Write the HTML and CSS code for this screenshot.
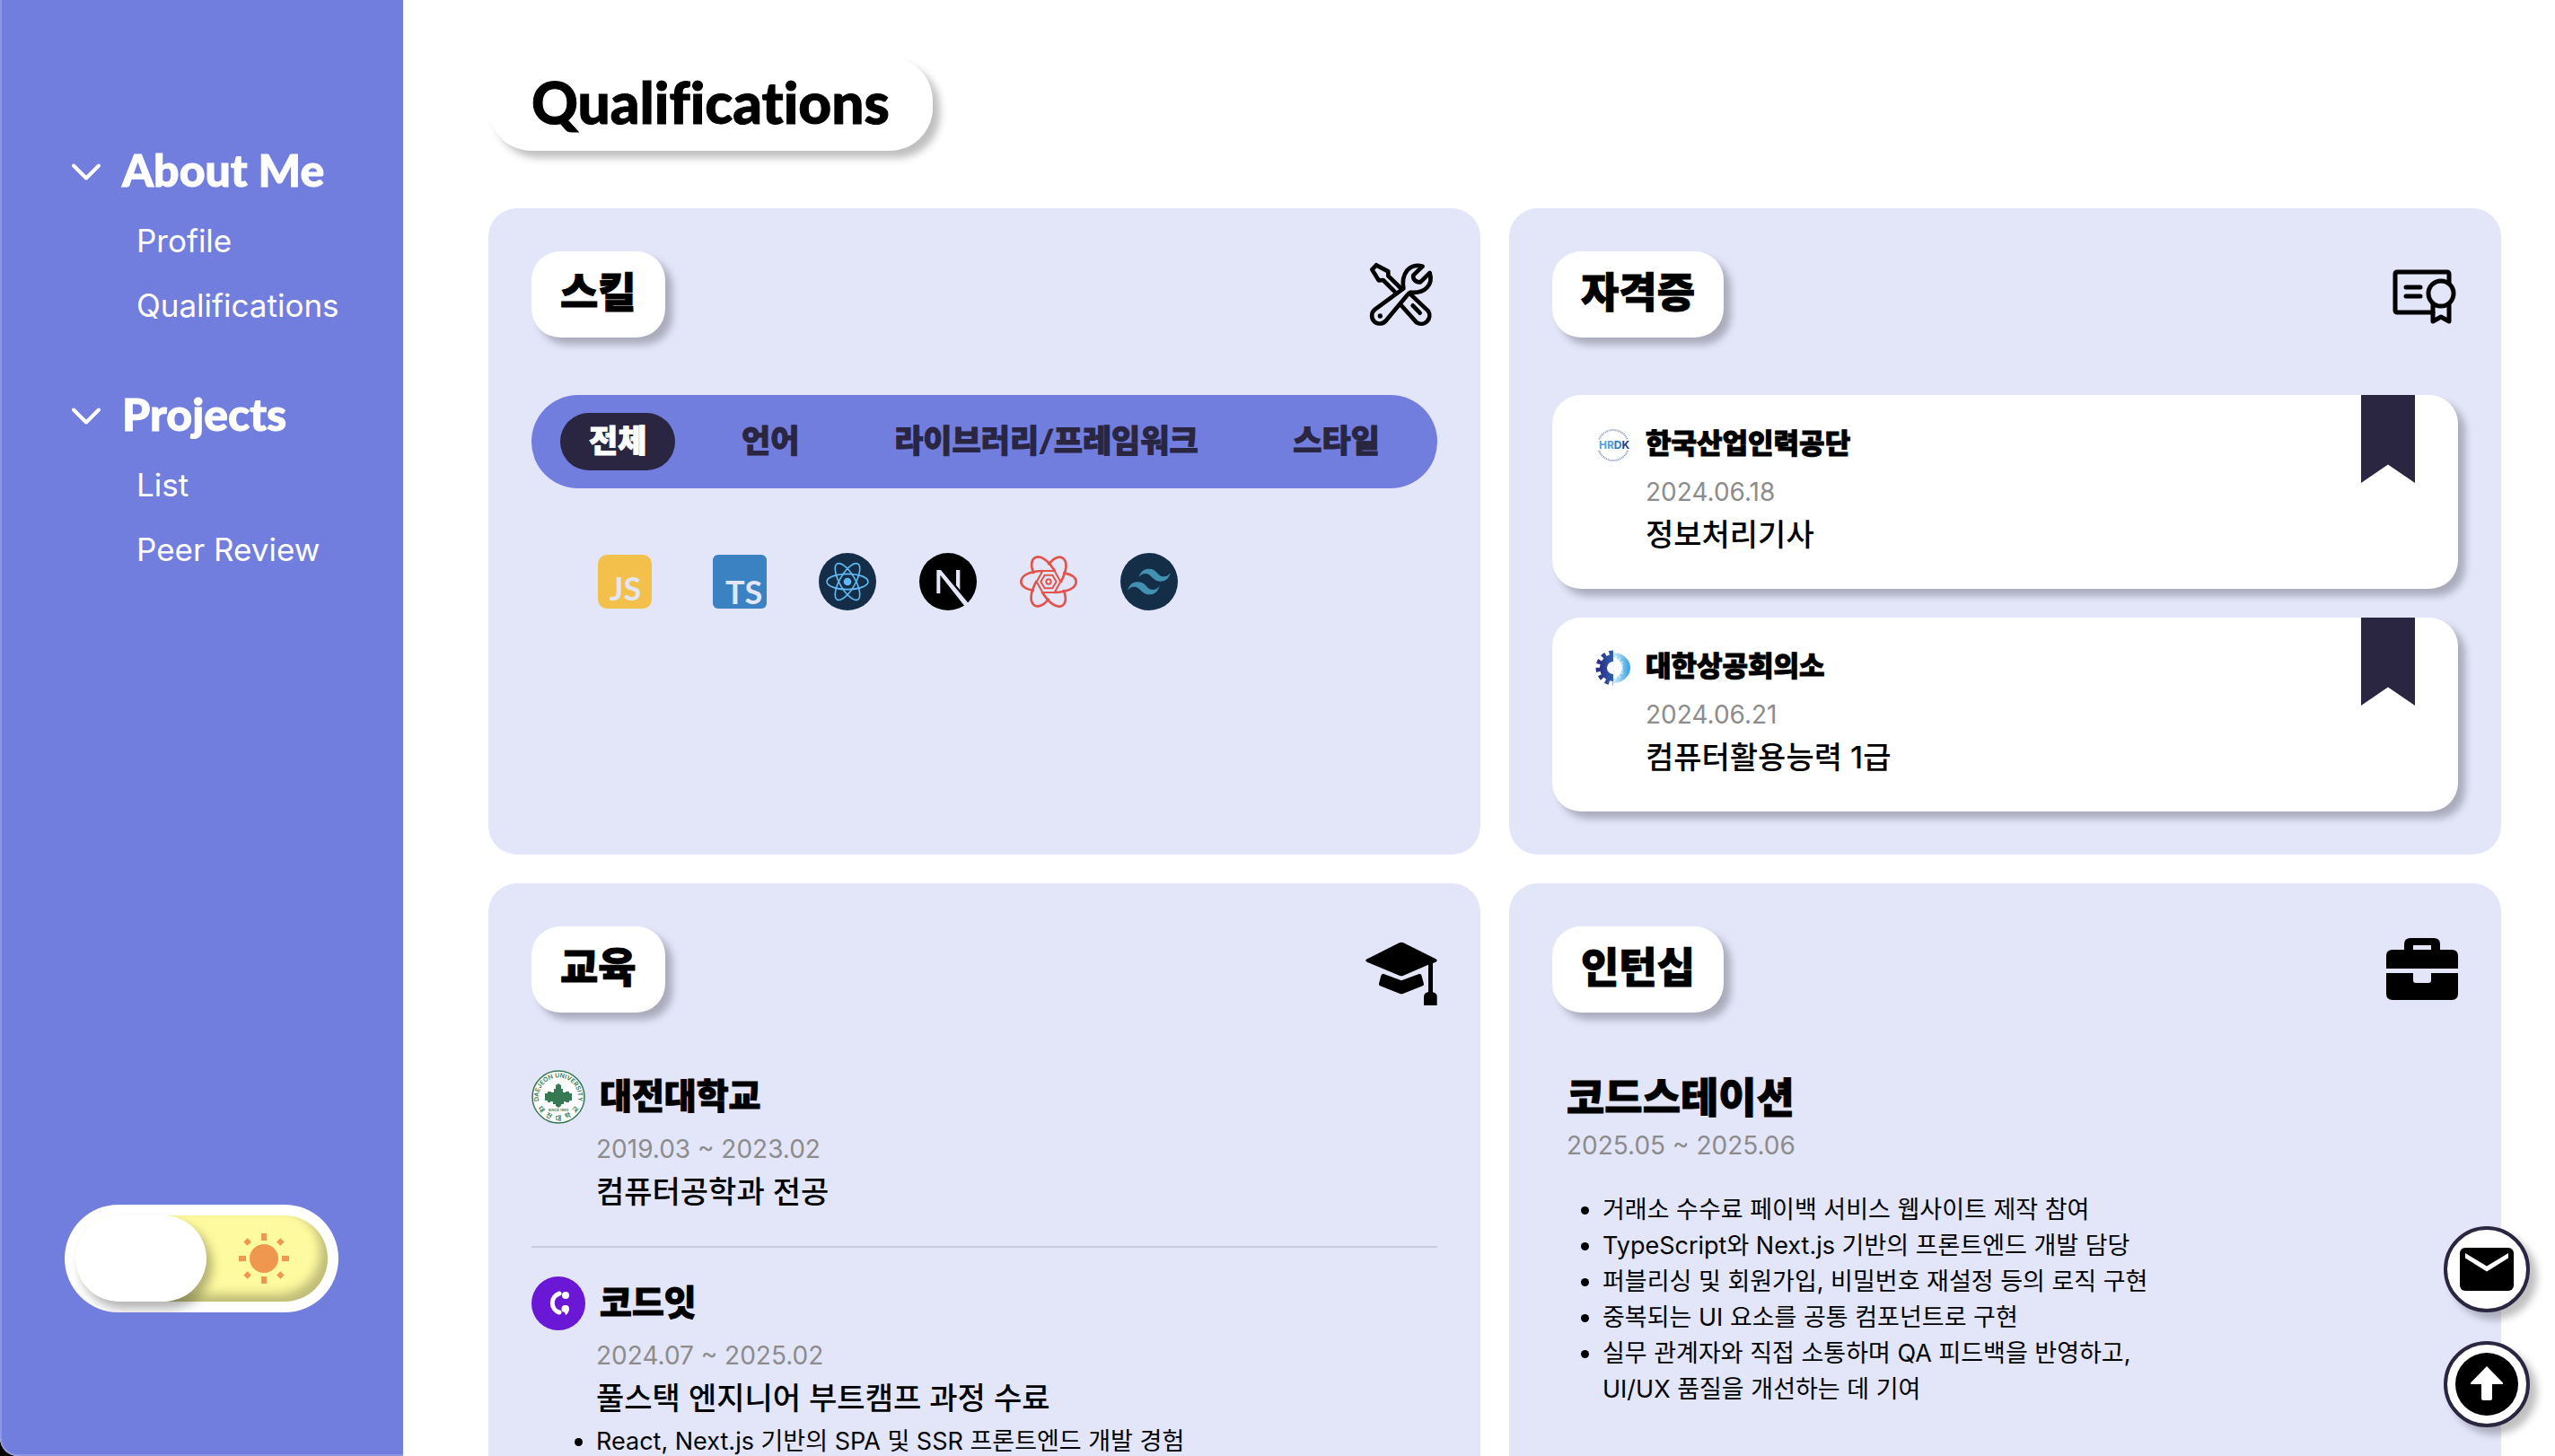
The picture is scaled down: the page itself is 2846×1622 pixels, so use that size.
FILE: index.html
```html
<!DOCTYPE html>
<html lang="ko">
<head>
<meta charset="utf-8">
<meta name="viewport" content="width=device-width, initial-scale=1">
<title>Qualifications</title>
<link rel="stylesheet" href="styles.css">
</head>
<body>
<div class="app">
  <aside class="sidebar">
    <nav class="nav">
      <section class="nav-group">
        <button class="nav-head" type="button" aria-expanded="true">
          <svg class="chevron" viewBox="0 0 32 20" aria-hidden="true"><path d="M2 2.500 16 16.500 30 2.500"/></svg>
          <span class="nav-title">About Me</span>
        </button>
        <a class="nav-link" href="#profile">Profile</a>
        <a class="nav-link" href="#qualifications">Qualifications</a>
      </section>
      <section class="nav-group">
        <button class="nav-head" type="button" aria-expanded="true">
          <svg class="chevron" viewBox="0 0 32 20" aria-hidden="true"><path d="M2 2.500 16 16.500 30 2.500"/></svg>
          <span class="nav-title">Projects</span>
        </button>
        <a class="nav-link" href="#list">List</a>
        <a class="nav-link" href="#peer-review">Peer Review</a>
      </section>
    </nav>
    <label class="toggle">
      <input class="toggle-input" type="checkbox" aria-label="Dark mode">
      <span class="toggle-track">
        <span class="toggle-thumb"></span>
        <svg class="sun" viewBox="0 0 56 56" aria-hidden="true">
          <circle cx="28" cy="28" r="16"/>
          <path d="M25 0h6v8h-6zM25 48h6v8h-6zM0 25h8v6H0zM48 25h8v6h-8z"/>
          <path d="M25 -1h6v6h-6zM25 51h6v6h-6zM-1 25h6v6h-6zM51 25h6v6h-6z" transform="rotate(45 28 28)"/>
        </svg>
      </span>
    </label>
  </aside>

  <main class="main" id="qualifications">
    <h1 class="page-title">Qualifications</h1>
    <div class="cards">
      <section class="card">
        <header class="card-head">
          <h2 class="badge">스킬</h2>
          <svg class="card-icon line-icon" viewBox="123 114 240 240" stroke-width="14" aria-hidden="true">
            <path d="M159 136 145 151 167 187 182 186 222 226M159 136 199 157 199 172 241 213"/>
            <path d="M276 236 333 290A28 28 0 0 1 294 328L242 270M281 271 305 296"/>
            <path d="M250 214C242 166 268 128 314 140L283 170C280 182 290 194 306 193L338 162C350 204 320 232 274 227C268 229 266 232 262 237L192 321C182 334 162 335 152 324C141 312 142 294 155 284Z"/>
            <circle cx="172" cy="306" r="8" fill="#000" stroke="none"/>
          </svg>
        </header>
        <div class="tabs" role="tablist">
          <button class="tab active" type="button" role="tab" aria-selected="true">전체</button>
          <button class="tab" type="button" role="tab" aria-selected="false">언어</button>
          <button class="tab" type="button" role="tab" aria-selected="false">라이브러리/프레임워크</button>
          <button class="tab" type="button" role="tab" aria-selected="false">스타일</button>
        </div>
        <ul class="skills">
          <li><svg class="skill wide" viewBox="0 0 80 80" role="img" aria-label="JavaScript"><rect x="10" y="10" width="60" height="60" rx="10" fill="#f3c14b"/><text class="skill-text" x="23" y="61" fill="#e3e5f9">JS</text></svg></li>
          <li><svg class="skill wide" viewBox="0 0 80 80" role="img" aria-label="TypeScript"><rect x="10" y="10" width="60" height="60" rx="6" fill="#3b82c2"/><text class="skill-text" x="24" y="65" fill="#e3e5f9">TS</text></svg></li>
          <li><svg class="skill" viewBox="36 48 192 192" role="img" aria-label="React"><circle cx="132" cy="144" r="96" fill="#152e47"/><g fill="none" stroke="#61b8f3" stroke-width="5"><ellipse cx="132" cy="144" rx="69" ry="26"/><ellipse cx="132" cy="144" rx="69" ry="26" transform="rotate(60 132 144)"/><ellipse cx="132" cy="144" rx="69" ry="26" transform="rotate(120 132 144)"/></g><circle cx="132" cy="144" r="13" fill="#61b8f3"/></svg></li>
          <li><svg class="skill" viewBox="372 48 192 192" role="img" aria-label="Next.js"><circle cx="468" cy="144" r="96"/><path d="M430 105h14l92 111-13 9-81-103v61h-12zM495 105h13v67l-13-16z" fill="#e3e5f9"/></svg></li>
          <li><svg class="skill" viewBox="708 48 192 192" role="img" aria-label="React Query">
            <g fill="none" stroke="#e2534b" stroke-width="8"><path id="petal" d="M756 173C725 170 712 156 712 144C712 122 742 109 786 108"/><use href="#petal" transform="rotate(60 804 144)"/><use href="#petal" transform="rotate(120 804 144)"/><use href="#petal" transform="rotate(180 804 144)"/><use href="#petal" transform="rotate(240 804 144)"/><use href="#petal" transform="rotate(300 804 144)"/>
            <path d="M784 108h40l20 36-20 36h-40l-20-36z" stroke-width="6"/><path d="M791 122h26l13 22-13 22h-26l-13-22z" stroke-width="6"/><circle cx="804" cy="144" r="8" stroke-width="6"/></g></svg></li>
          <li><svg class="skill" viewBox="1044 48 192 192" role="img" aria-label="Tailwind CSS"><circle cx="1140" cy="144" r="96" fill="#152e47"/><path id="wave" d="M1105 129C1112 108 1124 101 1139 101C1168 101 1167 126 1188 127C1198 127 1206 122 1212 114C1205 136 1194 143 1177 143C1151 142 1148 117 1127 117C1118 117 1111 121 1105 129Z" fill="#4391b1"/><use href="#wave" x="-37" y="44"/></svg></li>
        </ul>
      </section>

      <section class="card">
        <header class="card-head">
          <h2 class="badge">자격증</h2>
          <svg class="card-icon line-icon" viewBox="0 0 80 80" stroke-width="5" aria-hidden="true">
            <path d="M52 60H12a2 2 0 0 1-2-2V17a2 2 0 0 1 2-2H68a2 2 0 0 1 2 2V27M22 32H38M22 42H38"/>
            <circle cx="61" cy="39" r="14"/><path d="M52 50V70L61 65 70 70V50"/>
          </svg>
        </header>
        <div class="certs">
          <article class="cert">
            <svg class="cert-logo" viewBox="0 0 40 40" role="img" aria-label="HRDK"><circle cx="20" cy="20" r="17" fill="none" stroke="#7f91b8" stroke-width="2" stroke-dasharray="1 1"/><path d="M2 14h36v12H2z" fill="#fff"/><text class="hrdk" x="4" y="24" fill="#4aa3e3">HR<tspan fill="#2f77c0">D</tspan><tspan fill="#263f8c">K</tspan></text></svg>
            <div class="cert-body">
              <h3 class="cert-name">한국산업인력공단</h3>
              <time class="date">2024.06.18</time>
              <p class="subject">정보처리기사</p>
            </div>
            <span class="bookmark"></span>
          </article>
          <article class="cert">
            <svg class="cert-logo" viewBox="0 0 40 40" role="img" aria-label="KCCI">
              <defs>
                <linearGradient id="gear" x1="0" x2="1"><stop offset="0" stop-color="#2b2f87"/><stop offset="1" stop-color="#2f62ae"/></linearGradient>
                <linearGradient id="dots" x1="0" x2="1"><stop offset="0" stop-color="#d6ecf9"/><stop offset="1" stop-color="#2f9fe3"/></linearGradient>
              </defs>
              <path d="M20 5A15 15 0 0 0 20 35V27A7 7 0 0 1 20 13Z" fill="url(#gear)"/>
              <path d="M20 3.500A16.500 16.500 0 0 0 20 36.500" fill="none" stroke="url(#gear)" stroke-width="6" stroke-dasharray="4.500 4"/>
              <path d="M20 3A19 17 0 0 1 20 37V32Q29 30 30 20Q29 10 20 8Z" fill="url(#dots)"/>
              <path d="M23 7V11M27 9V14M30 13V27M27 26V31M23 29V33" stroke="#fff" stroke-width="1" stroke-dasharray="2 1" fill="none"/>
            </svg>
            <div class="cert-body">
              <h3 class="cert-name">대한상공회의소</h3>
              <time class="date">2024.06.21</time>
              <p class="subject">컴퓨터활용능력 1급</p>
            </div>
            <span class="bookmark"></span>
          </article>
        </div>
      </section>

      <section class="card">
        <header class="card-head">
          <h2 class="badge">교육</h2>
          <svg class="card-icon" viewBox="33 30 240 240" aria-hidden="true"><path d="M153 59Q156 59 160 61L268 115Q276 120 268 125L258 129V226Q272 229 272 240V270H228V240Q229 228 243 225V134L160 170Q153 173 146 170L38 125Q29 120 38 115L146 61Q150 59 153 59ZM92 164 153 187 212 165Q218 164 220 169L228 198Q229 203 224 205L158 231Q153 233 148 231L82 205Q77 203 78 197L85 170Q87 165 92 164Z"/></svg>
        </header>
        <div class="schools">
          <article class="school">
            <div class="school-head">
              <svg class="school-logo" viewBox="0 0 60 60" role="img" aria-label="DAEJEON UNIVERSITY">
                <circle cx="30" cy="30" r="29" fill="#fff" stroke="#357a52" stroke-width="1.500"/>
                <defs><path id="arc-top" d="M9 37A22 22 0 1 1 51 37"/><path id="arc-bottom" d="M5 37A26 26 0 0 0 55 37"/></defs>
                <g class="seal"><text><textPath href="#arc-top" startOffset="50%" text-anchor="middle">DAEJEON UNIVERSITY</textPath></text>
                <text class="seal-ko" text-anchor="middle"><textPath href="#arc-bottom" startOffset="14%">대</textPath><textPath href="#arc-bottom" startOffset="32%">전</textPath><textPath href="#arc-bottom" startOffset="50%">대</textPath><textPath href="#arc-bottom" startOffset="68%">학</textPath><textPath href="#arc-bottom" startOffset="86%">교</textPath></text>
                <text class="seal-since" x="30" y="46" text-anchor="middle">SINCE 1980</text></g>
                <path d="M15 26h3v-2h4v1h3v-4h2v-4l3-2 3 2v4h2v4h3v-1h4v2h3v8h-3v2h-4v-1h-2v3h-3v2l-3 2-3-2v-2h-3v-3h-3v1h-3v-2h-3z" fill="#357a52"/>
              </svg>
              <h3 class="school-name">대전대학교</h3>
            </div>
            <div class="school-body">
              <p class="date">2019.03 ~ 2023.02</p>
              <p class="subject">컴퓨터공학과 전공</p>
            </div>
          </article>
          <article class="school">
            <div class="school-head">
              <svg class="school-logo" viewBox="0 0 60 60" role="img" aria-label="codeit"><circle cx="30" cy="30" r="30" fill="#6a18d6"/><path d="M31 19A11 11 0 0 0 31 40" fill="none" stroke="#fff" stroke-width="5" stroke-linecap="round"/><circle cx="38" cy="21" r="4" fill="#fff"/><path d="M38 32a4 4 0 0 1 4 4c0 3-2 6-4 7l-1-3a4 4 0 0 1 1-8z" fill="#fff"/></svg>
              <h3 class="school-name">코드잇</h3>
            </div>
            <div class="school-body">
              <p class="date">2024.07 ~ 2025.02</p>
              <p class="subject">풀스택 엔지니어 부트캠프 과정 수료</p>
              <ul class="points"><li>React, Next.js 기반의 SPA 및 SSR 프론트엔드 개발 경험</li></ul>
            </div>
          </article>
        </div>
      </section>

      <section class="card">
        <header class="card-head">
          <h2 class="badge">인턴십</h2>
          <svg class="card-icon" viewBox="0 0 80 80" aria-hidden="true"><path d="M20 18v-6q0-7 7-7h26q7 0 7 7v6h13q7 0 7 7v14H0V25q0-7 7-7zM30 18h20v-5H30zM0 44h30v8q0 3 3 3h14q3 0 3-3v-8h30v23q0 7-7 7H7q-7 0-7-7z" fill-rule="evenodd"/></svg>
        </header>
        <article class="job">
          <h3 class="job-name">코드스테이션</h3>
          <p class="date">2025.05 ~ 2025.06</p>
          <ul class="points">
            <li>거래소 수수료 페이백 서비스 웹사이트 제작 참여</li>
            <li>TypeScript와 Next.js 기반의 프론트엔드 개발 담당</li>
            <li>퍼블리싱 및 회원가입, 비밀번호 재설정 등의 로직 구현</li>
            <li>중복되는 UI 요소를 공통 컴포넌트로 구현</li>
            <li>실무 관계자와 직접 소통하며 QA 피드백을 반영하고,<br>UI/UX 품질을 개선하는 데 기여</li>
          </ul>
        </article>
      </section>
    </div>
  </main>
</div>

<div class="fabs">
  <button class="fab" type="button" aria-label="Mail"><svg class="fab-mail" viewBox="0 0 60 48" aria-hidden="true"><rect width="60" height="48" rx="6"/><path d="M6 6 30 20.500 54 6v5.500L30 26.500 6 11.500z" fill="#fff"/></svg></button>
  <button class="fab" type="button" aria-label="Top"><svg class="fab-top" viewBox="0 0 70 70" aria-hidden="true"><circle cx="35" cy="35" r="35"/><path d="M35 15 53 33.500q.5 1.500-1 1.500H41v16q0 2-2 2h-8q-2 0-2-2V35H18q-1.500 0-1-1.500z" fill="#fff"/></svg></button>
</div>
</body>
</html>
```
FILE: styles.css
```css
:root {
  --primary: #727ede;
  --primary-edge: #8d97e6;
  --panel: #e3e5f9;
  --ink: #2a2541;
  --muted: #8c8c8c;
  --shadow: 8px 8px 8px rgba(0, 0, 0, .25);
  --display: Lato, "Noto Sans CJK KR", sans-serif;
  --text: Inter, "Noto Sans CJK KR", sans-serif;
}

* { box-sizing: border-box; margin: 0; padding: 0; }
html { background: #000; }
body { font-family: var(--text); color: #000; }
button { border: 0; background: none; font: inherit; color: inherit; cursor: pointer; }
h1, h2, h3, .tab, .nav-title { -webkit-text-stroke: 1px currentColor; }
ul { list-style: none; }
svg { display: block; flex: none; }

.app {
  display: flex;
  height: 100vh;
  overflow: hidden;
  background: #fff;
  border-bottom-left-radius: 20px;
}

/* Sidebar */
.sidebar {
  flex: none;
  width: 449px;
  display: flex;
  flex-direction: column;
  justify-content: space-between;
  padding: 156px 72px 158px 70px;
  background: var(--primary);
  border: solid var(--primary-edge);
  border-width: 0 0 2px 2px;
  border-bottom-left-radius: 20px;
  color: #fff;
}
.nav { display: flex; flex-direction: column; gap: 52px; }
.nav-group { display: flex; flex-direction: column; padding-left: 8px; }
.nav-head {
  display: flex;
  align-items: center;
  gap: 24px;
  height: 72px;
  margin-bottom: 4px;
  font: 900 50px/66px var(--display);
}
.nav-title { padding-bottom: 6px; white-space: nowrap; }
.chevron { width: 32px; height: 20px; fill: none; stroke: #fff; stroke-width: 4; stroke-linecap: round; stroke-linejoin: round; }
.nav-link {
  padding-left: 72px;
  color: #fff;
  font-size: 35px;
  line-height: 72px;
  text-decoration: none;
}

.toggle { display: block; height: 120px; padding: 12px; border-radius: 60px; background: #fff; overflow: hidden; cursor: pointer; position: relative; }
.toggle-input { position: absolute; opacity: 0; }
.toggle-track {
  display: flex;
  align-items: center;
  justify-content: space-between;
  height: 96px;
  padding-right: 43px;
  border-radius: 48px;
  background: #fdfa9f;
  box-shadow: inset -8px -8px 12px rgba(0, 0, 0, .25);
}
.toggle-thumb { width: 146px; height: 96px; border-radius: 48px; background: #fff; box-shadow: 6px 8px 12px rgba(0, 0, 0, .3); }
.sun { width: 56px; height: 56px; fill: #f0974f; }

/* Main column */
.main { flex: 1; min-width: 0; padding: 64px 60px 64px 95px; overflow-y: auto; scrollbar-width: none; }
.page-title {
  width: fit-content;
  height: 104px;
  padding: 0 48px;
  border-radius: 48px;
  background: #fff;
  box-shadow: var(--shadow);
  font: 900 64px/100px var(--display);
  font-variant-ligatures: none;
}
.cards { display: grid; grid-template-columns: repeat(2, minmax(0, 1fr)); gap: 32px; margin-top: 64px; }
.card { min-height: 720px; padding: 48px; border-radius: 32px; background: var(--panel); }
.card-head { display: flex; align-items: center; justify-content: space-between; margin-bottom: 64px; }
.badge {
  height: 96px;
  padding: 0 32px;
  border-radius: 32px;
  background: #fff;
  box-shadow: var(--shadow);
  font: 900 46px/90px var(--display);
}
.card-icon { width: 80px; height: 80px; }
.line-icon { fill: none; stroke: #000; stroke-linecap: round; stroke-linejoin: round; }

/* Skills */
.tabs { display: flex; justify-content: space-between; padding: 20px 32px; border-radius: 52px; background: var(--primary); color: var(--ink); }
.tab { height: 64px; padding: 0 32px 4px; border-radius: 32px; font: 900 35px/60px var(--display); }
.tab.active { background: var(--ink); color: #fff; }
.skills { display: flex; align-items: center; gap: 48px; padding: 64px; }
.skill { width: 64px; height: 64px; }
.skill.wide { width: 80px; height: 80px; }
.skill-text { font: 700 36px Lato, sans-serif; }

/* Certificates */
.certs { display: flex; flex-direction: column; gap: 32px; }
.cert { display: flex; gap: 16px; padding: 32px 48px; border-radius: 32px; background: #fff; box-shadow: var(--shadow); position: relative; }
.cert-logo { width: 40px; height: 40px; margin-top: 4px; }
.hrdk { font: 700 12px Inter, sans-serif; }
.cert-name { margin-bottom: 14px; font: 900 31px/42px var(--display); }
.date { display: block; color: var(--muted); font-size: 28px; line-height: 40px; }
.subject { font-size: 34px; font-weight: 500; line-height: 56px; }
.bookmark { position: absolute; top: 0; right: 48px; width: 60px; height: 98px; background: var(--ink); clip-path: polygon(0 0, 100% 0, 100% 100%, 50% 79%, 0 100%); }

/* Education */
.school + .school { margin-top: 32px; padding-top: 32px; border-top: 2px solid #c9cadc; }
.school-head { display: flex; align-items: center; gap: 16px; margin-bottom: 8px; }
.school-logo { width: 60px; height: 60px; }
.school-name { padding-bottom: 4px; font: 900 39px/56px var(--display); }
.school-body { padding-left: 72px; }
.seal { fill: #357a52; font: 600 7px Inter, "Noto Sans CJK KR", sans-serif; }
.seal-ko { font-size: 7px; }
.seal-since { font-size: 4px; }

/* Internship */
.job { padding: 0 16px; }
.job-name { padding-bottom: 4px; font: 900 46px/60px var(--display); }
.job .points { padding-top: 32px; padding-left: 40px; }
.points { list-style: disc; font-size: 27px; line-height: 40px; }

/* Floating actions */
.fabs { position: fixed; right: 28px; bottom: 32px; display: flex; flex-direction: column; gap: 32px; }
.fab { display: flex; align-items: center; justify-content: center; width: 96px; height: 96px; border: 4px solid var(--ink); border-radius: 50%; background: #fff; box-shadow: var(--shadow); }
.fab-mail { width: 60px; height: 48px; }
.fab-top { width: 70px; height: 70px; }
```
